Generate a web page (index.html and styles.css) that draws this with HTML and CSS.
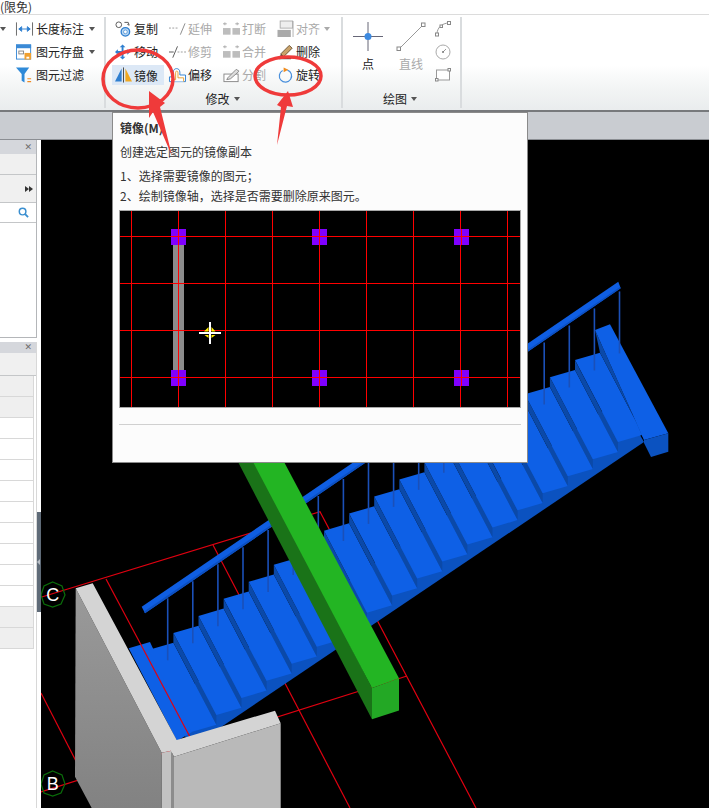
FILE: index.html
```html
<!DOCTYPE html>
<html lang="zh">
<head>
<meta charset="utf-8">
<title>镜像</title>
<link rel="stylesheet" href="styles.css">
</head>
<body>
<div class="app">
  <div class="titlebar">(限免)</div>

  <div class="ribbon">
    <div class="group group-a">
      <div class="caret-stub"><i class="caret"></i></div>
      <div class="col">
        <div class="tool"><svg class="ico" viewBox="0 0 18 16"><path d="M.5 1v14M17.5 1v14" stroke="#666" fill="none"/><path d="M3 8h12M3 8l3-2.5v5zM15 8l-3-2.5v5z" stroke="#2f7fd0" fill="#2f7fd0"/></svg><span>长度标注</span><i class="caret"></i></div>
        <div class="tool"><svg class="ico" viewBox="0 0 18 16"><rect x=".5" y=".5" width="15" height="15" fill="#fff" stroke="#3b8ad6"/><rect x="0" y="0" width="16" height="4" fill="#3b8ad6"/><rect x="3" y="7" width="5" height="3" fill="none" stroke="#888"/><rect x="9" y="9" width="7" height="7" fill="#f0a030"/><rect x="11" y="13" width="3" height="2" fill="#fff"/></svg><span>图元存盘</span><i class="caret"></i></div>
        <div class="tool"><svg class="ico" viewBox="0 0 18 16"><path d="M0 0h14L9 7v9L6 14V7z" fill="#2f8ad8"/><path d="M12 12h4M12 15h4" stroke="#f08a20" stroke-width="1.2"/></svg><span>图元过滤</span></div>
      </div>
    </div>

    <div class="group group-b">
      <div class="group-body">
        <div class="col col-1">
          <div class="tool"><svg class="ico" viewBox="0 0 18 16"><circle cx="4" cy="3.5" r="3" fill="#fff" stroke="#555"/><circle cx="11" cy="11" r="4.5" fill="#bcd8f2" stroke="#2f7fd0" stroke-width="1.4"/><circle cx="11" cy="11" r="2" fill="#fff" stroke="#2f7fd0" stroke-width=".7"/><path d="M10 1h4l1 3-2-1" fill="none" stroke="#555"/></svg><span>复制</span></div>
          <div class="tool"><svg class="ico" viewBox="0 0 18 16"><path d="M8 0l3 3H9v4h4V5l3 3-3 3V9H9v4h2l-3 3-3-3h2V9H3v2L0 8l3-3v2h4V3H5z" fill="#2f7fd0"/></svg><span>移动</span></div>
          <div class="tool is-active"><svg class="ico" viewBox="0 0 18 16"><path d="M7 1v14H0z" fill="#2f7fd0"/><path d="M9 0v16" stroke="#444"/><path d="M11 1l7 14h-7z" fill="#f0a820"/></svg><span>镜像</span></div>
        </div>
        <div class="col col-2">
          <div class="tool is-off"><svg class="ico" viewBox="0 0 18 16"><path d="M0 7h10" stroke="#999" stroke-dasharray="2 1.5" fill="none"/><path d="M12 14L17 2" stroke="#888" fill="none"/></svg><span>延伸</span></div>
          <div class="tool is-off"><svg class="ico" viewBox="0 0 18 16"><path d="M0 8h5" stroke="#555" fill="none"/><path d="M9 8h9" stroke="#999" stroke-dasharray="2 1.5" fill="none"/><path d="M4 14L9 2" stroke="#555" fill="none"/></svg><span>修剪</span></div>
          <div class="tool is-text"><svg class="ico" viewBox="0 0 18 16"><path d="M.5 15V10h4V5c0-5 7-5 7 0v3h6v7z" fill="#fff" stroke="#2f7fd0"/><path d="M3 15v-2h4V6c0-3 2.500-3 2.500 0v5h6v4" fill="#fff" stroke="#e8a030"/></svg><span>偏移</span></div>
        </div>
        <div class="col col-3">
          <div class="tool is-off"><svg class="ico" viewBox="0 0 18 16"><path d="M2 1v3M0 2.500h4M15 1v3M13 2.500h4" stroke="#aaa"/><rect x="0" y="7" width="8" height="7" fill="#bdbdbd"/><rect x="10" y="7" width="8" height="7" fill="#bdbdbd"/></svg><span>打断</span></div>
          <div class="tool is-off"><svg class="ico" viewBox="0 0 18 16"><path d="M2 1v3M0 2.500h4M15 1v3M13 2.500h4" stroke="#aaa"/><rect x="0" y="7" width="8" height="7" fill="#bdbdbd"/><rect x="10" y="7" width="8" height="7" fill="#bdbdbd"/></svg><span>合并</span></div>
          <div class="tool is-off"><svg class="ico" viewBox="0 0 18 16"><rect x="1" y="7" width="15" height="8" fill="#fff" stroke="#888"/><path d="M5 11L14 2l3 2-9 8-4 1z" fill="#ddd" stroke="#888"/></svg><span>分割</span></div>
        </div>
        <div class="col col-4">
          <div class="tool is-off"><svg class="ico" viewBox="0 0 18 18"><rect x="3" y="0" width="14" height="8" fill="#eee" stroke="#aaa"/><rect x="0" y="10" width="15" height="8" fill="#aaa"/><path d="M17.500 0v18" stroke="#aaa"/></svg><span>对齐</span><i class="caret"></i></div>
          <div class="tool is-text"><svg class="ico" viewBox="0 0 18 16"><path d="M4 10L13 1l3 3-9 9z" fill="#c9a26a" stroke="#6b5230"/><path d="M2 15h13" stroke="#222" stroke-width="1.200"/><path d="M4 10l3 3-4 1z" fill="#444"/></svg><span>删除</span></div>
          <div class="tool is-text"><svg class="ico" viewBox="0 0 18 16"><path d="M6 3.200A6.500 6.500 0 1 0 11 2.800" fill="none" stroke="#4a90dc" stroke-width="1.300"/><path d="M7 0l5 2.500L7 5z" fill="#f08c1e"/></svg><span>旋转</span></div>
        </div>
      </div>
      <div class="group-label"><span>修改</span><i class="caret"></i></div>
    </div>

    <div class="group group-c">
      <div class="group-body">
        <div class="big">
          <svg class="big-ico" viewBox="0 0 30 30"><path d="M15 0v29M0 14.500h30" stroke="#667" fill="none"/><circle cx="15" cy="14.500" r="3.500" fill="#3d8ae0"/></svg>
          <span>点</span>
        </div>
        <div class="big big-wide is-off">
          <svg class="big-ico" viewBox="0 0 30 30"><path d="M3 27L27 3" stroke="#999" fill="none"/><rect x="1" y="25" width="3.500" height="3.500" fill="#fff" stroke="#888"/><rect x="25.500" y="1" width="3.500" height="3.500" fill="#fff" stroke="#888"/></svg>
          <span>直线</span>
        </div>
        <div class="stack">
          <svg class="small-ico" viewBox="0 0 16 16"><path d="M2 13C2 7 7 2 14 2" fill="none" stroke="#999"/><rect x=".5" y="12" width="3" height="3" fill="#fff" stroke="#888"/><rect x="12.500" y=".5" width="3" height="3" fill="#fff" stroke="#888"/><rect x="5" y="4" width="2.500" height="2.500" fill="#fff" stroke="#888"/></svg>
          <svg class="small-ico" viewBox="0 0 16 16"><circle cx="8" cy="8" r="7" fill="#fff" stroke="#aaa"/><path d="M8 8l3-3" stroke="#999"/><circle cx="8" cy="8" r="1" fill="#777"/></svg>
          <svg class="small-ico" viewBox="0 0 16 16"><rect x="1.500" y="3" width="13" height="10" fill="#fff" stroke="#999"/><rect x=".5" y="11.500" width="2.500" height="2.500" fill="#fff" stroke="#888"/><rect x="13" y="1.500" width="2.500" height="2.500" fill="#fff" stroke="#888"/></svg>
        </div>
      </div>
      <div class="group-label"><span>绘图</span><i class="caret"></i></div>
    </div>
  </div>

  <div class="tabstrip"></div>

  <div class="workspace">
    <aside class="sidebar">
      <section class="panel panel-top">
        <header class="panel-head"><span class="close">✕</span></header>
        <div class="band band-1"></div>
        <div class="band band-2"><span class="more"><i></i><i></i></span></div>
        <div class="searchrow"><svg class="lens" viewBox="0 0 12 12"><circle cx="5" cy="5" r="3.600" fill="none" stroke="#3a8fd0" stroke-width="1.600"/><path d="M7.800 7.800L11 11" stroke="#3a8fd0" stroke-width="2"/></svg></div>
        <div class="listbody"></div>
      </section>
      <section class="panel panel-bottom">
        <header class="panel-head panel-head-low"><span class="close">✕</span></header>
        <div class="band band-3"></div>
        <div class="rows">
          <div class="row row-grey"></div>
          <div class="row row-grey"></div>
          <div class="row"></div><div class="row"></div><div class="row"></div><div class="row"></div>
          <div class="row"></div><div class="row"></div><div class="row"></div><div class="row"></div><div class="row"></div>
          <div class="row row-grey"></div>
          <div class="row row-grey"></div>
        </div>
      </section>
    </aside>
    <div class="splitter"><div class="splitter-tab"><i></i></div></div>

    <main class="viewport">
      <svg class="scene" viewBox="41 140 668 668">
        <defs>
          <g id="step">
            <polygon points="148.300,650 173.400,642.700 216.400,724.700 191.300,732" fill="#0e60e6"/>
            <polygon points="173.400,642.700 173.400,633 216.400,715 216.400,724.700" fill="#0b49a8"/>
          </g>
          <path id="post" d="M167.700 598.300v62" stroke="#1b50b8" stroke-width="1.600"/>
          <linearGradient id="wallshade" x1="0" y1="0" x2="0" y2="1">
            <stop offset="0" stop-color="#9a9a9a"/><stop offset="1" stop-color="#828282"/>
          </linearGradient>
        </defs>

        <g class="axis">
          <path d="M41.700 597L320 511.700L476 808"/>
          <path d="M213 545L350 808"/>
          <path d="M41 792L407 676"/>
          <path d="M41 693L96 800"/>
        </g>

        <polygon points="190,748 644,442 620,400 170,700" fill="#0b52c0"/>
        <polygon points="128.700,648.300 150,642 192,732 177,741" fill="#0e60e6"/>
        <use href="#step"/>
        <use href="#step" transform="translate(25.100 -17.050)"/>
        <use href="#step" transform="translate(50.200 -34.100)"/>
        <use href="#step" transform="translate(75.300 -51.150)"/>
        <use href="#step" transform="translate(100.400 -68.200)"/>
        <use href="#step" transform="translate(125.500 -85.250)"/>
        <use href="#step" transform="translate(150.600 -102.300)"/>
        <use href="#step" transform="translate(175.700 -119.350)"/>
        <use href="#step" transform="translate(200.800 -136.400)"/>
        <use href="#step" transform="translate(225.900 -153.450)"/>
        <use href="#step" transform="translate(251 -170.500)"/>
        <use href="#step" transform="translate(276.100 -187.550)"/>
        <use href="#step" transform="translate(301.200 -204.600)"/>
        <use href="#step" transform="translate(326.300 -221.650)"/>
        <use href="#step" transform="translate(351.400 -238.700)"/>
        <use href="#step" transform="translate(376.500 -255.750)"/>
        <use href="#step" transform="translate(401.600 -272.800)"/>
        <polygon points="575,360 600,352.700 643,434.700 618,442" fill="#0e60e6"/>
        <polygon points="595,330 600,352.700 643,434.700 644,440" fill="#0b49a8"/>
        <polygon points="595,330 610,324.300 668.300,433.300 644,440" fill="#0e60e6"/>
        <polygon points="644,440 668.300,433.300 668.300,451.700 651,457 644,443" fill="#0b52c0"/>

        <polygon points="141.700,606.700 618.300,281.700 620.700,288.300 145,613.300" fill="#0f5ee2"/>
        <polygon points="144,611.500 620,287 620.700,288.300 145,613.300" fill="#0c4fc0"/>

        <use href="#post"/>
        <use href="#post" transform="translate(25.100 -17.050)"/>
        <use href="#post" transform="translate(50.200 -34.100)"/>
        <use href="#post" transform="translate(75.300 -51.150)"/>
        <use href="#post" transform="translate(100.400 -68.200)"/>
        <use href="#post" transform="translate(125.500 -85.250)"/>
        <use href="#post" transform="translate(150.600 -102.300)"/>
        <use href="#post" transform="translate(175.700 -119.350)"/>
        <use href="#post" transform="translate(200.800 -136.400)"/>
        <use href="#post" transform="translate(225.900 -153.450)"/>
        <use href="#post" transform="translate(251 -170.500)"/>
        <use href="#post" transform="translate(276.100 -187.550)"/>
        <use href="#post" transform="translate(301.200 -204.600)"/>
        <use href="#post" transform="translate(326.300 -221.650)"/>
        <use href="#post" transform="translate(351.400 -238.700)"/>
        <use href="#post" transform="translate(376.500 -255.750)"/>
        <use href="#post" transform="translate(401.600 -272.800)"/>
        <use href="#post" transform="translate(426.700 -289.850)"/>
        <use href="#post" transform="translate(451.800 -306.900)"/>

        <g class="axis"><path d="M106 579L190 737"/></g>

        <polygon points="237,460 255,460 372,688 372,719.300" fill="#1a7318"/>
        <polygon points="252,460 283,460 399,678.300 372,688" fill="#23b523"/>
        <polygon points="372,688 399,678.300 399,710.500 372,719.300" fill="#23a825"/>

        <polygon points="75.700,588.300 161.700,752.700 161.700,808 91.700,808 75,776.700" fill="url(#wallshade)"/>
        <polygon points="161.700,752.700 172,750.700 172,808 161.700,808" fill="#c2c2c2"/>
        <polygon points="171,750.700 174,756.700 174,808 171,808" fill="#8c8c8c"/>
        <polygon points="174,756.700 280.700,723.300 280.700,808 174,808" fill="#b9b9b9"/>
        <polygon points="75.700,588.300 92.700,583.300 176.700,740 275,710.700 280.700,723.300 174,756.700 171,750.700 161.700,752.700" fill="#d4d4d4"/>

        <polygon class="bubble" points="52.700,582 62,586 65,595 61,604 52.700,607 44,604 41,595 44,586"/>
        <text class="bubble-text" x="52.700" y="601">C</text>
        <polygon class="bubble" points="52.700,771 62,775 65,784 61,793 52.700,796 44,793 41,784 44,775"/>
        <text class="bubble-text" x="52.700" y="790">B</text>
      </svg>
    </main>
  </div>

  <div class="tooltip">
    <div class="tip-title">镜像(M)</div>
    <div class="tip-desc">创建选定图元的镜像副本</div>
    <ol class="tip-steps">
      <li>1、选择需要镜像的图元；</li>
      <li>2、绘制镜像轴，选择是否需要删除原来图元。</li>
    </ol>
    <svg class="tip-figure" viewBox="119 210 402 198">
      <rect x="119" y="210" width="402" height="198" fill="#000"/>
      <rect x="173" y="245" width="11" height="126" fill="#8c8c8c"/>
      <g class="grid">
        <path d="M131.500 210v198M178.500 210v198M225.500 210v198M272.500 210v198M319.500 210v198M366.500 210v198M413.500 210v198M460.500 210v198M507.500 210v198"/>
        <path d="M119 236.500h402M119 283.500h402M119 330.500h402M119 377.500h402"/>
      </g>
      <g fill="#8000ff">
        <rect x="171" y="229" width="15" height="16"/><rect x="312" y="229" width="15" height="16"/><rect x="454" y="229" width="15" height="16"/>
        <rect x="171" y="370" width="15" height="16"/><rect x="312" y="370" width="15" height="16"/><rect x="454" y="370" width="15" height="16"/>
      </g>
      <g class="grid"><path d="M178.500 229v16M319.500 229v16M461.500 229v16M178.500 370v16M319.500 370v16M461.500 370v16M171 236.500h15M312 236.500h15M454 236.500h15M171 377.500h15M312 377.500h15M454 377.500h15"/></g>
      <path d="M208.500 327v4.500H204zM211.500 327l4 4.500h-4zM204.500 335h4v3zM211.500 335h4l-4 3z" fill="#ffee00"/>
      <path d="M210 322v22M199 333h22" stroke="#fff" stroke-width="2"/>
    </svg>
    <div class="tip-rule"></div>
  </div>

  <svg class="marks" viewBox="0 0 709 808">
    <ellipse cx="138" cy="79" rx="35" ry="29"/>
    <ellipse cx="288" cy="76" rx="33" ry="19"/>
    <polygon class="arrow" points="149,91 165,103 160,107 172,156 153,112 149,118"/>
    <polygon class="arrow" points="288,91 293,107 287,106 277,145 281,107 277,105"/>
  </svg>
</div>
</body>
</html>
```

FILE: styles.css
```css
* { box-sizing: border-box; }
html, body { margin: 0; padding: 0; }
body {
  width: 709px;
  height: 808px;
  overflow: hidden;
  background: #fff;
  font-family: "Noto Sans CJK SC", "Liberation Sans", sans-serif;
  font-size: 12px;
  color: #222;
}
.app { position: relative; width: 709px; height: 808px; display: flex; flex-direction: column; overflow: hidden; }

.titlebar { height: 15px; line-height: 14px; border-bottom: 1px solid #dcdcdc; color: #333; white-space: nowrap; }

.ribbon {
  height: 97px;
  display: flex;
  background: linear-gradient(#fff 0, #fff 50px, #f3f5f5 72px, #e9eced 96px);
  border-bottom: 2px solid #77797c;
}
.group { position: relative; display: flex; flex-direction: column; height: 91px; margin-top: 2px; border-right: 2px solid #d9dcde; }
.group-a { width: 106px; flex-direction: row; }
.group-b { width: 237px; }
.group-c { width: 119px; }
.group-body { display: flex; height: 72px; }
.group-label { height: 19px; display: flex; align-items: center; justify-content: center; line-height: 19px; }
.group-b .group-label { padding-right: 2px; }
.group-c .group-label { padding-right: 3px; }

.col { display: flex; flex-direction: column; }
.col-1 { width: 54px; margin-left: 6px; }
.col-2 { width: 54px; }
.col-3 { width: 54px; }
.col-4 { width: 60px; }
.group-a .col { margin-left: 0; }
.caret-stub { width: 16px; height: 23px; display: flex; align-items: center; }
.caret-stub .caret { margin-left: 0; }

.tool { height: 23px; display: flex; align-items: center; gap: 2px; white-space: nowrap; padding-left: 3px; }
.group-a .tool { padding-left: 0; gap: 3px; }
.tool .caret { margin-left: 2px; }
.ico { width: 17px; height: 16px; flex: none; overflow: visible; }
.is-off { color: #a9a9a9; }
.is-text { color: #222; }
.is-active { background: #dce8f6; margin-right: 2px; height: 20px; margin-top: 2px; }
.caret { display: inline-block; width: 0; height: 0; margin-left: 4px; border-left: 3.500px solid transparent; border-right: 3.500px solid transparent; border-top: 4px solid #555; }
.is-off .caret { border-top-color: #aaa; }

.big { width: 50px; display: flex; flex-direction: column; align-items: center; padding-top: 5px; }
.big-wide { width: 36px; }
.big-ico { width: 30px; height: 30px; flex: none; }
.big span { line-height: 24px; }
.stack { width: 16px; margin-left: 6px; padding-top: 4px; display: flex; flex-direction: column; gap: 7px; }
.small-ico { width: 16px; height: 16px; }

.tabstrip { height: 28px; background: #c9ccd1; border-bottom: 1px solid #8b8e93; flex: none; }

.workspace { flex: 1; display: flex; min-height: 0; }
.sidebar { width: 37px; flex: none; display: flex; flex-direction: column; gap: 4px; overflow: hidden; }
.panel { border-right: 1px solid #b4b6b9; flex: none; }
.panel-top { height: 198px; border-bottom: 1px solid #b4b6b9; display: flex; flex-direction: column; }
.panel-bottom { flex: 1; border-right-color: #d8d8d8; display: flex; flex-direction: column; }
.panel-head { height: 14px; flex: none; background: #d5d7dc; display: flex; justify-content: flex-end; align-items: center; padding-right: 4px; }
.panel-head-low { height: 11px; }
.close { font-size: 9px; line-height: 11px; color: #6e6e6e; font-family: "DejaVu Sans", sans-serif; font-weight: bold; }
.band { background: #f0f0f0; border-bottom: 1px solid #c4c6c8; flex: none; }
.band-1 { height: 21px; }
.band-2 { height: 28px; display: flex; justify-content: flex-end; align-items: center; padding-right: 3px; }
.more { display: flex; }
.more i { width: 0; height: 0; border-left: 4px solid #333; border-top: 3px solid transparent; border-bottom: 3px solid transparent; }
.searchrow { height: 20px; flex: none; background: #fff; border-bottom: 1px solid #c4c6c8; display: flex; justify-content: flex-end; align-items: center; padding-right: 7px; }
.lens { width: 11px; height: 11px; }
.listbody { flex: 1; background: #fff; }
.band-3 { height: 23px; }
.rows { width: 34px; border-right: 1px solid #d8d8d8; }
.row { height: 21px; background: #fff; border-bottom: 1px solid #d8d8d8; }
.row-grey { background: #efefef; }

.splitter { width: 4px; flex: none; position: relative; background: #fff; }
.splitter-tab { position: absolute; left: 0; top: 372px; width: 4px; height: 100px; background: #5f6b78; display: flex; align-items: center; }
.splitter-tab i { width: 0; height: 0; border-right: 3px solid #b8bec5; border-top: 3px solid transparent; border-bottom: 3px solid transparent; }

.viewport { flex: 1; background: #000; min-width: 0; }
.scene { display: block; width: 668px; height: 668px; }
.axis path { fill: none; stroke: #e00010; stroke-width: 1.200; }
.bubble { fill: none; stroke: #0a6e0a; stroke-width: 1.200; }
.bubble-text { fill: #fff; font-family: "Liberation Sans", sans-serif; font-size: 18px; text-anchor: middle; }

.tooltip {
  position: absolute;
  left: 112px;
  top: 112px;
  width: 416px;
  height: 351px;
  background: #fcfcfc;
  border: 1px solid #8a8a8a;
  padding: 7px 6px 0 7px;
  color: #333;
}
.tip-title { font-weight: bold; line-height: 16px; height: 16px; }
.tip-desc { line-height: 16px; margin-top: 8px; }
.tip-steps { list-style: none; margin: 6px 0 0; padding: 0; line-height: 20px; }
.tip-figure { display: block; width: 402px; height: 198px; margin-top: 4px; margin-left: -1px; outline: 1px solid #a8a8a8; outline-offset: -1px; }
.grid path { fill: none; stroke: #ff0000; stroke-width: 1; }
.tip-rule { height: 1px; background: #d0d0d0; margin-top: 16px; margin-left: -1px; width: 402px; }

.marks { position: absolute; left: 0; top: 0; width: 709px; height: 808px; pointer-events: none; }
.marks ellipse { fill: none; stroke: #ef3a3a; stroke-width: 3.500; }
.arrow { fill: #ef3a3a; }
```
